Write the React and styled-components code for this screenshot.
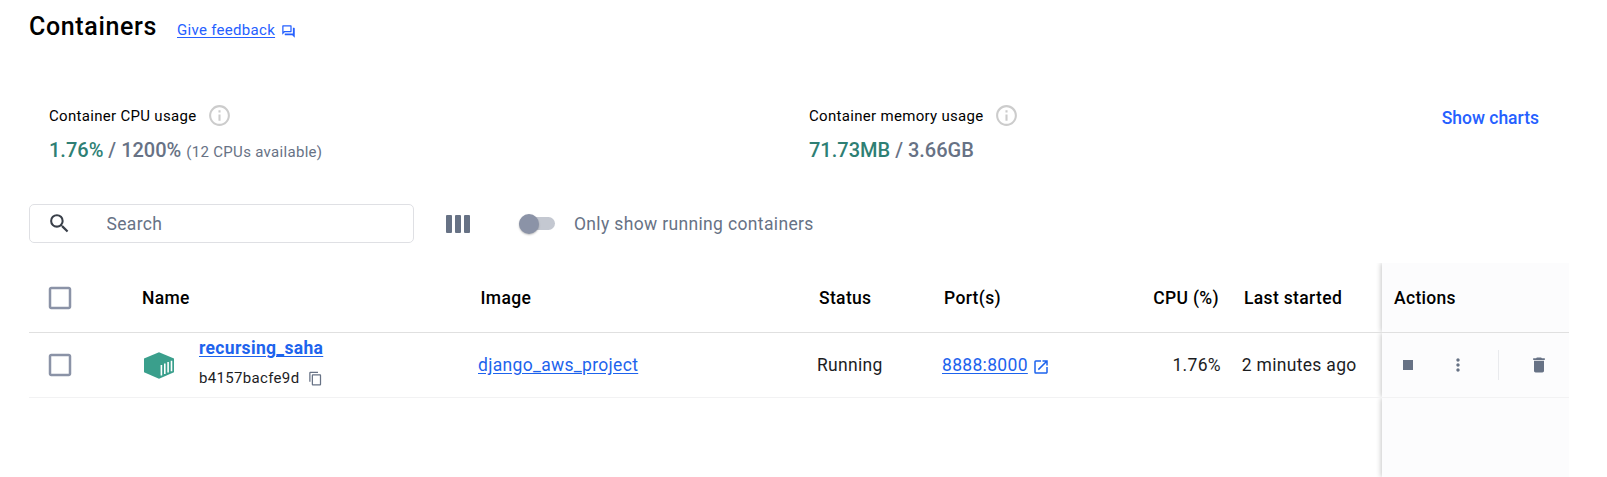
import React from "react";
import styled, { createGlobalStyle } from "styled-components";
import {
  MdOutlineForum,
  MdInfoOutline,
  MdSearch,
  MdCheckBoxOutlineBlank,
  MdContentCopy,
  MdOpenInNew,
  MdDelete,
  MdMoreVert,
} from "react-icons/md";

const Global = createGlobalStyle`
  * { box-sizing: border-box; }
  body {
    margin: 0;
    background: #fff;
    color: #000;
    font-family: Roboto, "Liberation Sans", sans-serif;
    overflow: hidden;
  }
`;

const Page = styled.main`
  display: flex;
  flex-direction: column;
  height: 477px;
  padding: 0 38px 0 29px;
`;

const TitleBar = styled.header`
  display: flex;
  align-items: baseline;
  height: 95px;
  padding-top: 12px;
`;

const Title = styled.h1`
  margin: 0;
  font-size: 25px;
  font-weight: 500;
  letter-spacing: 0.64px;
  line-height: 30px;
`;

const Feedback = styled.a`
  display: flex;
  align-items: center;
  gap: 5.5px;
  margin-left: 20px;
  color: #2560ff;
  font-size: 15px;
  letter-spacing: 0.3px;
  line-height: 20px;
  span { text-decoration: underline; text-underline-offset: 2px; }
  svg { margin-top: 2px; }
`;

const Stats = styled.section`
  display: flex;
  height: 109px;
  padding: 8px 30px 0 20px;
`;

const Stat = styled.div`
  width: ${(p) => p.$width}px;
`;

const StatLabel = styled.div`
  display: flex;
  align-items: center;
  gap: 10.5px;
  height: 25px;
  font-size: 15px;
  letter-spacing: 0.31px;
  svg { color: #ccc; }
`;

const StatValue = styled.div`
  margin-top: 9px;
  color: #677285;
  font-size: 20px;
  font-weight: 500;
  line-height: 26px;
  white-space: pre;
  b { color: #2e7f74; font-weight: 500; }
  small { font-size: 15px; font-weight: 400; letter-spacing: 0.31px; }
`;

const ChartsButton = styled.button`
  align-self: flex-start;
  margin: 4px 0 0 auto;
  padding: 0;
  border: 0;
  background: none;
  color: #2560ff;
  font: 500 17.5px/22px Roboto, sans-serif;
`;

const Toolbar = styled.section`
  display: flex;
  align-items: center;
  height: 39px;
`;

const SearchBox = styled.label`
  display: flex;
  align-items: center;
  width: 385px;
  height: 39px;
  padding-left: 17px;
  border: 1px solid #dfe0e4;
  border-radius: 5px;
  svg { color: #393f49; }
`;

const SearchInput = styled.input`
  width: 280px;
  margin-left: 34.5px;
  padding: 0;
  border: 0;
  outline: 0;
  font: 400 17.5px/22px Roboto, sans-serif;
  letter-spacing: 0.33px;
  &::placeholder { color: #677285; opacity: 1; }
`;

const ColumnsButton = styled.div`
  display: flex;
  gap: 2.5px;
  margin-left: 32px;
  i { width: 6.4px; height: 18px; border-radius: 1px; background: #677285; }
`;

const Switch = styled.span`
  display: flex;
  align-items: center;
  width: 36px;
  height: 13px;
  margin-left: 48.8px;
  border-radius: 7px;
  background: #c4c8d1;
  &::before {
    content: "";
    width: 20px;
    height: 20px;
    border-radius: 50%;
    background: #8b93a7;
    box-shadow: 0 1px 2px rgba(0, 0, 0, 0.25);
  }
`;

const SwitchLabel = styled.span`
  margin-left: 19px;
  color: #677285;
  font-size: 17.5px;
  letter-spacing: 0.35px;
`;

const Table = styled.section`
  display: flex;
  flex-direction: column;
  flex: 1;
  margin-top: 20px;
`;

const Row = styled.div`
  display: grid;
  grid-template-columns: 111px 338px 339px 125px 180px 99px 161px 187px;
  flex: ${(p) => (p.$height ? "none" : "1")};
  height: ${(p) => (p.$height ? `${p.$height}px` : "auto")};
  border-bottom: ${(p) => (p.$line ? `1px solid ${p.$line}` : "0")};
`;

const Cell = styled.div`
  display: flex;
  align-items: center;
  justify-content: ${(p) => (p.$end ? "flex-end" : "flex-start")};
  color: #1c1d1f;
  font-size: 17.5px;
  letter-spacing: 0.32px;
  white-space: nowrap;
  padding-left: ${(p) => p.$left || 0}px;
`;

const HeadCell = styled(Cell)`
  color: #000;
  font-weight: 500;
  letter-spacing: 0.34px;
  padding-left: ${(p) => p.$left ?? 2}px;
  padding-right: ${(p) => (p.$end ? 2 : 0)}px;
`;

const CheckCell = styled(Cell)`
  padding-left: 16px;
  color: #8b93a7;
`;

const ActionCell = styled(Cell)`
  grid-column: 8;
  background: #fcfcfd;
  box-shadow: -1px 0 5px rgba(0, 0, 0, 0.22);
  clip-path: inset(0 0 0 -8px);
  color: ${(p) => (p.$head ? "#000" : "#677285")};
  font-weight: ${(p) => (p.$head ? 500 : 400)};
`;

const Link = styled.a`
  color: #1d63ed;
  font-weight: ${(p) => (p.$strong ? 700 : 400)};
  text-decoration: underline;
  text-underline-offset: 2px;
`;

const NameStack = styled.div`
  display: flex;
  flex-direction: column;
  margin: -4px 0 0 25px;
`;

const IdLine = styled.div`
  display: flex;
  align-items: center;
  gap: 9px;
  margin-top: 10px;
  font-size: 15px;
  letter-spacing: 0.33px;
  line-height: 20px;
  svg { color: #677285; }
`;

const PortIcon = styled(MdOpenInNew)`
  margin: 4px 0 0 4px;
  color: #1d63ed;
`;

const StopGlyph = styled.span`
  width: 10px;
  height: 10px;
  margin-left: 21px;
  background: #677285;
`;

const MoreIcon = styled(MdMoreVert)`
  margin-left: 35px;
`;

const Divider = styled.span`
  width: 1px;
  height: 30px;
  margin-left: 30px;
  background: #e9eaed;
`;

const TrashIcon = styled(MdDelete)`
  margin-left: 30px;
`;

function ContainerIcon() {
  return (
    <svg width="30" height="27" viewBox="0 0 30 27">
      <path d="M15 0.3 30 6.5V20.3L15 26.7 0 20.3V6.5Z" fill="#3a9f8c" />
      <path
        d="M17.4 13V23.4M20.8 11.5V21.9M24.1 10V20.6M27.5 8.7V19.2"
        stroke="#fff"
        strokeWidth="1.6"
      />
    </svg>
  );
}

export default function App() {
  return (
    <>
      <Global />
      <Page>
        <TitleBar>
          <Title>Containers</Title>
          <Feedback>
            <span>Give feedback</span>
            <MdOutlineForum size={15} />
          </Feedback>
        </TitleBar>
        <Stats>
          <Stat $width={760}>
            <StatLabel>
              Container CPU usage <MdInfoOutline size={25} />
            </StatLabel>
            <StatValue>
              <b>1.76%</b> / 1200% <small>(12 CPUs available)</small>
            </StatValue>
          </Stat>
          <Stat $width={300}>
            <StatLabel>
              Container memory usage <MdInfoOutline size={25} />
            </StatLabel>
            <StatValue>
              <b>71.73MB</b> / 3.66GB
            </StatValue>
          </Stat>
          <ChartsButton>Show charts</ChartsButton>
        </Stats>
        <Toolbar>
          <SearchBox>
            <MdSearch size={25} />
            <SearchInput placeholder="Search" />
          </SearchBox>
          <ColumnsButton>
            <i />
            <i />
            <i />
          </ColumnsButton>
          <Switch />
          <SwitchLabel>Only show running containers</SwitchLabel>
        </Toolbar>
        <Table>
          <Row $height={70} $line="#e0e0e0">
            <CheckCell>
              <MdCheckBoxOutlineBlank size={30} />
            </CheckCell>
            <HeadCell>Name</HeadCell>
            <HeadCell $left={2.5}>Image</HeadCell>
            <HeadCell>Status</HeadCell>
            <HeadCell>Port(s)</HeadCell>
            <HeadCell $end>CPU (%)</HeadCell>
            <HeadCell $left={23}>Last started</HeadCell>
            <ActionCell $head $left={12}>Actions</ActionCell>
          </Row>
          <Row $height={65} $line="#f2f2f3">
            <CheckCell>
              <MdCheckBoxOutlineBlank size={30} />
            </CheckCell>
            <Cell $left={4}>
              <ContainerIcon />
              <NameStack>
                <Link $strong>recursing_saha</Link>
                <IdLine>
                  b4157bacfe9d <MdContentCopy size={15} />
                </IdLine>
              </NameStack>
            </Cell>
            <Cell>
              <Link>django_aws_project</Link>
            </Cell>
            <Cell>Running</Cell>
            <Cell>
              <Link>8888:8000</Link>
              <PortIcon size={18} />
            </Cell>
            <Cell $end>1.76%</Cell>
            <Cell $left={20.7}>2 minutes ago</Cell>
            <ActionCell>
              <StopGlyph />
              <MoreIcon size={20} />
              <Divider />
              <TrashIcon size={20} />
            </ActionCell>
          </Row>
          <Row>
            <ActionCell />
          </Row>
        </Table>
      </Page>
    </>
  );
}
